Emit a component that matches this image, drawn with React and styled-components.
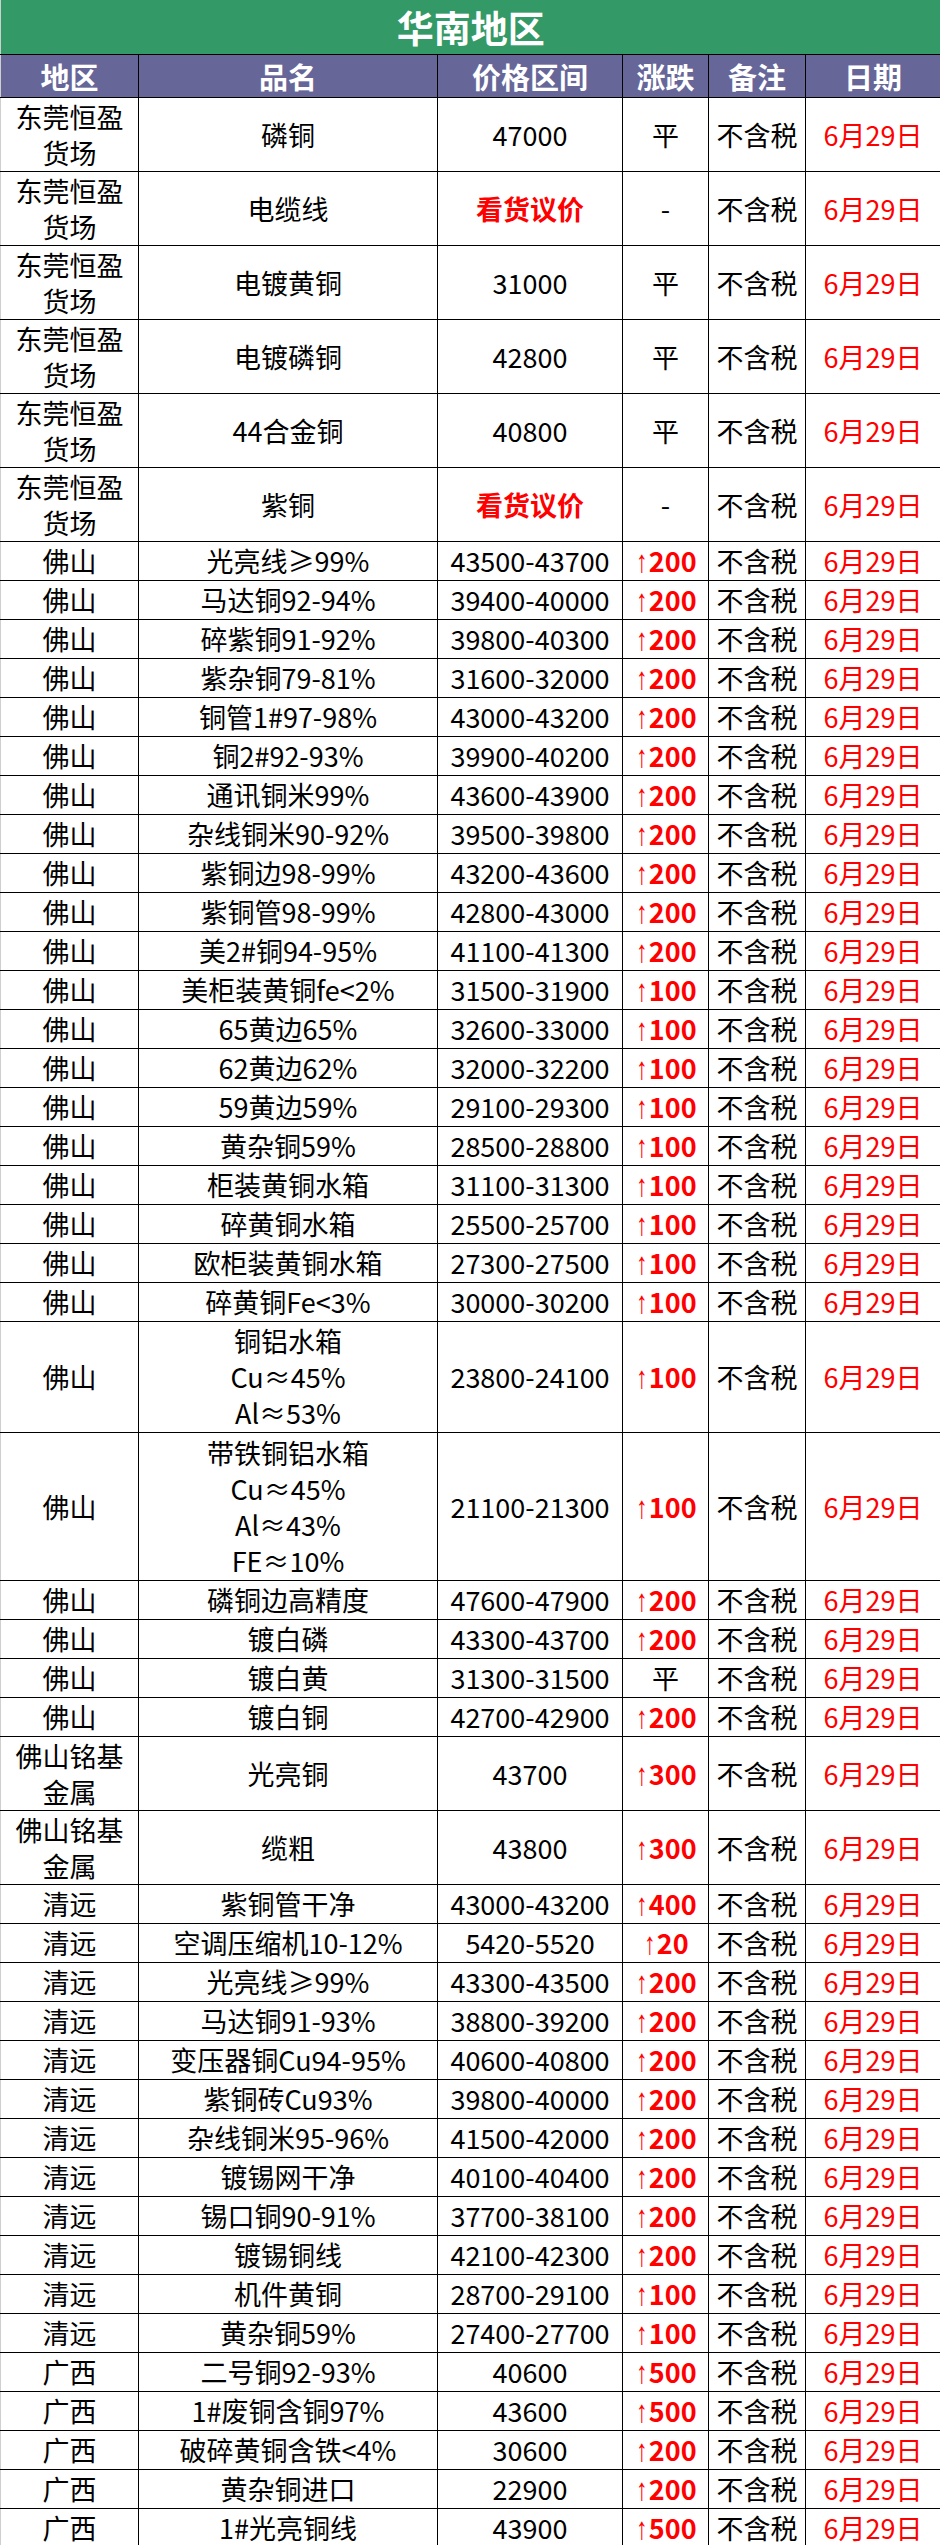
import React from "react";
import styled, { createGlobalStyle } from "styled-components";

const GlobalStyle = createGlobalStyle`
  html, body { margin: 0; padding: 0; background: #fff; }
  body { font-family: "Noto Sans CJK SC", "Noto Sans", sans-serif; }
`;

const Table = styled.table`
  width: 940px;
  border-collapse: collapse;
  table-layout: fixed;
  font-family: "Noto Sans CJK SC", "Noto Sans", sans-serif;
  color: #000;
`;

const TitleCell = styled.th`
  height: 54px;
  padding: 0;
  background: #339966;
  color: #fff;
  font-size: 37px;
  font-weight: 700;
  line-height: 50px;
  text-align: center;
  border-bottom: 1px solid #000;
  border-left: 1px solid #cfcfcf;
`;

const HeadCell = styled.th`
  height: 42px;
  padding: 0;
  background: #666699;
  color: #fff;
  font-size: 29px;
  font-weight: 700;
  line-height: 38px;
  text-align: center;
  border: 1px solid #000;
  &:first-child { border-left-color: #cfcfcf; }
`;

const heights = { 1: 39, 2: 74, 3: 111, 4: 148 };

const Row = styled.tr`
  height: ${(p) => heights[p.$lines]}px;
`;

const Cell = styled.td`
  padding: 0;
  border: 1px solid #000;
  text-align: center;
  vertical-align: middle;
  font-size: 27px;
  line-height: 36px;
  white-space: nowrap;
  overflow: hidden;
  color: ${(p) => (p.$red ? "#ff0000" : "#000")};
  font-weight: ${(p) => (p.$bold ? 700 : 400)};
  &:first-child { border-left-color: #cfcfcf; }
`;

const Line = styled.div`
  line-height: 36px;
  height: 36px;
`;

const Arrow = styled.span`
  display: inline-block;
  font-family: "Liberation Sans", Arial, sans-serif;
  font-weight: 400;
  font-size: 31px;
  line-height: 1;
  transform: scaleX(0.75);
  margin-right: -1px;
`;

const rows = [
  [["东莞恒盈", "货场"], ["磷铜"], "47000", "平"],
  [["东莞恒盈", "货场"], ["电缆线"], "看货议价", "-"],
  [["东莞恒盈", "货场"], ["电镀黄铜"], "31000", "平"],
  [["东莞恒盈", "货场"], ["电镀磷铜"], "42800", "平"],
  [["东莞恒盈", "货场"], ["44合金铜"], "40800", "平"],
  [["东莞恒盈", "货场"], ["紫铜"], "看货议价", "-"],
  [["佛山"], ["光亮线≥99%"], "43500-43700", "200"],
  [["佛山"], ["马达铜92-94%"], "39400-40000", "200"],
  [["佛山"], ["碎紫铜91-92%"], "39800-40300", "200"],
  [["佛山"], ["紫杂铜79-81%"], "31600-32000", "200"],
  [["佛山"], ["铜管1#97-98%"], "43000-43200", "200"],
  [["佛山"], ["铜2#92-93%"], "39900-40200", "200"],
  [["佛山"], ["通讯铜米99%"], "43600-43900", "200"],
  [["佛山"], ["杂线铜米90-92%"], "39500-39800", "200"],
  [["佛山"], ["紫铜边98-99%"], "43200-43600", "200"],
  [["佛山"], ["紫铜管98-99%"], "42800-43000", "200"],
  [["佛山"], ["美2#铜94-95%"], "41100-41300", "200"],
  [["佛山"], ["美柜装黄铜fe<2%"], "31500-31900", "100"],
  [["佛山"], ["65黄边65%"], "32600-33000", "100"],
  [["佛山"], ["62黄边62%"], "32000-32200", "100"],
  [["佛山"], ["59黄边59%"], "29100-29300", "100"],
  [["佛山"], ["黄杂铜59%"], "28500-28800", "100"],
  [["佛山"], ["柜装黄铜水箱"], "31100-31300", "100"],
  [["佛山"], ["碎黄铜水箱"], "25500-25700", "100"],
  [["佛山"], ["欧柜装黄铜水箱"], "27300-27500", "100"],
  [["佛山"], ["碎黄铜Fe<3%"], "30000-30200", "100"],
  [["佛山"], ["铜铝水箱", "Cu≈45%", "Al≈53%"], "23800-24100", "100"],
  [["佛山"], ["带铁铜铝水箱", "Cu≈45%", "Al≈43%", "FE≈10%"], "21100-21300", "100"],
  [["佛山"], ["磷铜边高精度"], "47600-47900", "200"],
  [["佛山"], ["镀白磷"], "43300-43700", "200"],
  [["佛山"], ["镀白黄"], "31300-31500", "平"],
  [["佛山"], ["镀白铜"], "42700-42900", "200"],
  [["佛山铭基", "金属"], ["光亮铜"], "43700", "300"],
  [["佛山铭基", "金属"], ["缆粗"], "43800", "300"],
  [["清远"], ["紫铜管干净"], "43000-43200", "400"],
  [["清远"], ["空调压缩机10-12%"], "5420-5520", "20"],
  [["清远"], ["光亮线≥99%"], "43300-43500", "200"],
  [["清远"], ["马达铜91-93%"], "38800-39200", "200"],
  [["清远"], ["变压器铜Cu94-95%"], "40600-40800", "200"],
  [["清远"], ["紫铜砖Cu93%"], "39800-40000", "200"],
  [["清远"], ["杂线铜米95-96%"], "41500-42000", "200"],
  [["清远"], ["镀锡网干净"], "40100-40400", "200"],
  [["清远"], ["锡口铜90-91%"], "37700-38100", "200"],
  [["清远"], ["镀锡铜线"], "42100-42300", "200"],
  [["清远"], ["机件黄铜"], "28700-29100", "100"],
  [["清远"], ["黄杂铜59%"], "27400-27700", "100"],
  [["广西"], ["二号铜92-93%"], "40600", "500"],
  [["广西"], ["1#废铜含铜97%"], "43600", "500"],
  [["广西"], ["破碎黄铜含铁<4%"], "30600", "200"],
  [["广西"], ["黄杂铜进口"], "22900", "200"],
  [["广西"], ["1#光亮铜线"], "43900", "500"],
];

const widths = [138, 299, 185, 86, 97, 135];
const headers = ["地区", "品名", "价格区间", "涨跌", "备注", "日期"];

function Lines({ items }) {
  return items.map((t, i) => <Line key={i}>{t}</Line>);
}

function Change({ value }) {
  if (value === "平" || value === "-") return <Cell>{value}</Cell>;
  return (
    <Cell $red $bold>
      <Arrow>↑</Arrow>
      {value}
    </Cell>
  );
}

export default function App() {
  return (
    <>
      <GlobalStyle />
      <Table>
        <colgroup>
          {widths.map((w, i) => (
            <col key={i} style={{ width: w }} />
          ))}
        </colgroup>
        <thead>
          <tr>
            <TitleCell colSpan={6}>华南地区</TitleCell>
          </tr>
          <tr>
            {headers.map((h) => (
              <HeadCell key={h}>{h}</HeadCell>
            ))}
          </tr>
        </thead>
        <tbody>
          {rows.map(([area, name, price, change], i) => {
            const lines = Math.max(area.length, name.length);
            const special = price === "看货议价";
            return (
              <Row key={i} $lines={lines}>
                <Cell>
                  <Lines items={area} />
                </Cell>
                <Cell>
                  <Lines items={name} />
                </Cell>
                <Cell $red={special} $bold={special}>
                  {price}
                </Cell>
                <Change value={change} />
                <Cell>不含税</Cell>
                <Cell $red>6月29日</Cell>
              </Row>
            );
          })}
        </tbody>
      </Table>
    </>
  );
}
